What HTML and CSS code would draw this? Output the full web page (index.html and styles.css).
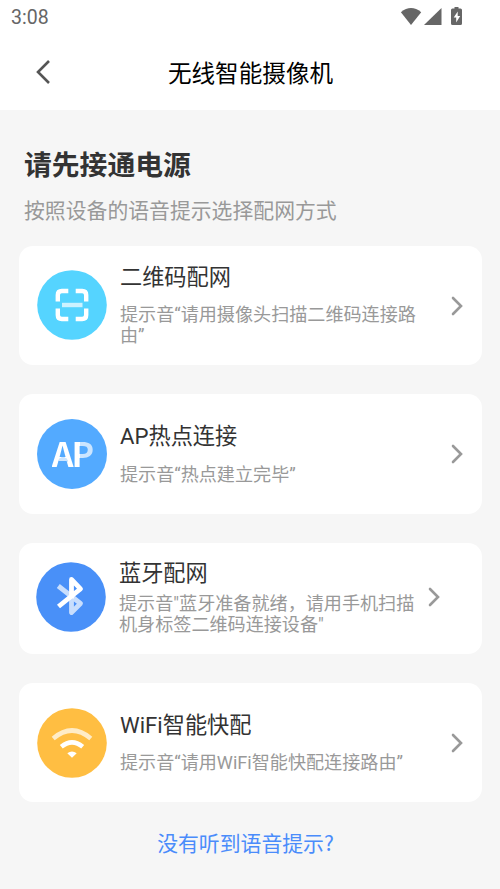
FILE: index.html
```html
<!DOCTYPE html>
<html lang="zh-CN">
<head>
<meta charset="utf-8">
<title>无线智能摄像机</title>
<link rel="stylesheet" href="styles.css">
</head>
<body>
<div class="statusbar">
  <span class="time">3:08</span>
  <svg class="status-icons" width="64" height="20" viewBox="0 0 64 20" fill="#666">
    <path d="M.9 5.2Q11 -3 21.2 5.2L11 18z"/>
    <path d="M41.500 1v17H24z"/>
    <path d="M54.500 0h4v1.500h2q1.500 0 1.500 1.500v13.500q0 1.500-1.500 1.500h-8q-1.500 0-1.500-1.500V3q0-1.500 1.500-1.500h2z"/>
    <path d="M57.700 4.500l-4 6h2.500V15.500l4-6.500h-2.500z" fill="#fff"/>
  </svg>
</div>
<header class="navbar">
  <svg class="back" width="16" height="26" viewBox="0 0 16 26"><path d="M14 2L3 13l11 11" fill="none" stroke="#555" stroke-width="2.600"/></svg>
  <h1>无线智能摄像机</h1>
</header>
<main>
  <h2>请先接通电源</h2>
  <p class="lead">按照设备的语音提示选择配网方式</p>

  <section class="card card-qr">
    <svg class="icon" viewBox="0 0 70 70">
      <circle cx="35" cy="35" r="34.800" fill="#55d4ff"/>
      <path d="M20.800 31.500V25q0-4 4-4h6.500M38.700 21h6.500q4 0 4 4v6.500M49.200 38.500V45q0 4-4 4h-6.500M31.300 49h-6.500q-4 0-4-4v-6.500" fill="none" stroke="#fff" stroke-width="4.400"/>
      <path d="M25 35h20.500" stroke="#fff" stroke-opacity=".7" stroke-width="4.400"/>
    </svg>
    <div class="body"><h3>二维码配网</h3><p>提示音“请用摄像头扫描二维码连接路由”</p></div>
    <svg class="chevron" viewBox="0 0 12 20"><path d="M2 2l8 8-8 8"/></svg>
  </section>

  <section class="card card-ap">
    <div class="icon ap-icon"><span class="bar">A</span><span class="soft">P</span></div>
    <div class="body"><h3>AP热点连接</h3><p>提示音“热点建立完毕”</p></div>
    <svg class="chevron" viewBox="0 0 12 20"><path d="M2 2l8 8-8 8"/></svg>
  </section>

  <section class="card card-bt">
    <svg class="icon" viewBox="0 0 70 70">
      <circle cx="35" cy="35" r="34.800" fill="#4990f8"/>
      <g fill="none" stroke="#fff" stroke-width="4.800" stroke-linejoin="round">
        <path d="M22.300 24L44.500 41.500 35.500 50.500V35.500" stroke-opacity=".7"/>
        <path d="M35.500 36.500V17.500L44.500 26.800 22.500 44.500"/>
      </g>
    </svg>
    <div class="body"><h3>蓝牙配网</h3><p>提示音"蓝牙准备就绪，请用手机扫描<br>机身标签二维码连接设备"</p></div>
    <svg class="chevron" viewBox="0 0 12 20"><path d="M2 2l8 8-8 8"/></svg>
  </section>

  <section class="card card-wifi">
    <svg class="icon" viewBox="0 0 70 70">
      <circle cx="35" cy="35" r="34.800" fill="#ffbe42"/>
      <path d="M16.200 30.500Q35 14.500 53.800 30.500" fill="none" stroke="#fff" stroke-opacity=".7" stroke-width="4.600"/>
      <path d="M24.300 38.800Q35 30 45.700 38.800" fill="none" stroke="#fff" stroke-width="4.600"/>
      <path d="M30.300 45.300Q35 41.700 39.700 45.300L35 49.800z" fill="#fff"/>
    </svg>
    <div class="body"><h3>WiFi智能快配</h3><p>提示音“请用WiFi智能快配连接路由”</p></div>
    <svg class="chevron" viewBox="0 0 12 20"><path d="M2 2l8 8-8 8"/></svg>
  </section>

  <a class="help">没有听到语音提示<span class="mark">?</span></a>
</main>
</body>
</html>
```

FILE: styles.css
```css
* { box-sizing: border-box; margin: 0; padding: 0; }
body {
  width: 500px;
  height: 889px;
  overflow: hidden;
  background: #f6f6f6;
  font-family: Roboto, "Noto Sans CJK SC", sans-serif;
  color: #333;
}
.statusbar {
  display: flex;
  justify-content: space-between;
  height: 35px;
  padding: 7px 36px 0 11px;
  background: #fff;
}
.time { font-size: 19.5px; line-height: 22px; color: #666; }
.status-icons { display: block; }
.navbar {
  display: grid;
  grid-template-columns: 60px 1fr 60px;
  align-items: center;
  height: 75px;
  padding-bottom: 1px;
  background: #fff;
}
.back { margin-left: 35px; }
.navbar h1 {
  padding: 3px 0 0 1px;
  font-size: 23.6px;
  font-weight: 400;
  line-height: 36px;
  text-align: center;
  color: #000;
}
main { padding: 36px 18px 0 19px; }
h2 { margin-left: 5px; font-size: 27.8px; font-weight: 700; line-height: 40px; }
.lead {
  margin: 10px 0 19px 5px;
  font-size: 20.85px;
  line-height: 31px;
  color: #999;
}
.card {
  display: flex;
  align-items: center;
  height: 119px;
  margin-bottom: 29px;
  padding: 0 19px 0 18px;
  border-radius: 14px;
  background: #fff;
}
.icon { flex: none; width: 70px; height: 70px; }
.ap-icon {
  display: flex;
  align-items: center;
  justify-content: center;
  padding: 0 0 2px 2px;
  border-radius: 50%;
  background: #53aaff;
  color: #fff;
  font: 700 34px/68px "Noto Sans CJK SC", sans-serif;
}
.bar {
  margin-right: -2px;
  background: radial-gradient(ellipse 5px 4px at 50% 42px, #cbe5ff 90%, #fff 100%);
  background-clip: text;
  color: transparent;
}
.soft {
  background: linear-gradient(90deg, #fff 8px, #cbe5ff 8px);
  background-clip: text;
  color: transparent;
}
.body { width: 300px; margin-left: 13px; }
.body h3 { font-size: 22.2px; font-weight: 400; line-height: 32px; }
.body p { margin-top: 11px; font-size: 18.1px; line-height: 21px; color: #999; }
.chevron {
  width: 12px;
  height: 20px;
  margin-left: auto;
  fill: none;
  stroke: #999;
  stroke-width: 2.6;
  stroke-linecap: round;
}
.card-qr .icon { margin-top: -1px; }
.card-qr .body { padding-bottom: 4px; }
.card-ap { height: 120px; }
.card-ap .body { padding-bottom: 4px; }
.card-ap .body p { margin-top: 12px; }
.card-bt { height: 111px; padding: 0 42px 0 17px; }
.card-bt .icon, .card-bt .chevron { margin-top: -3px; }
.card-bt .body { padding-bottom: 6px; }
.card-bt .body p { margin-top: 4px; }
.card-wifi .body { padding-bottom: 4px; }
.help {
  display: block;
  margin-top: -4px;
  padding-right: 10px;
  font-size: 20.85px;
  line-height: 31px;
  text-align: center;
  color: #4a8cfb;
}
.mark { font-family: "Noto Sans CJK SC", sans-serif; }
```
